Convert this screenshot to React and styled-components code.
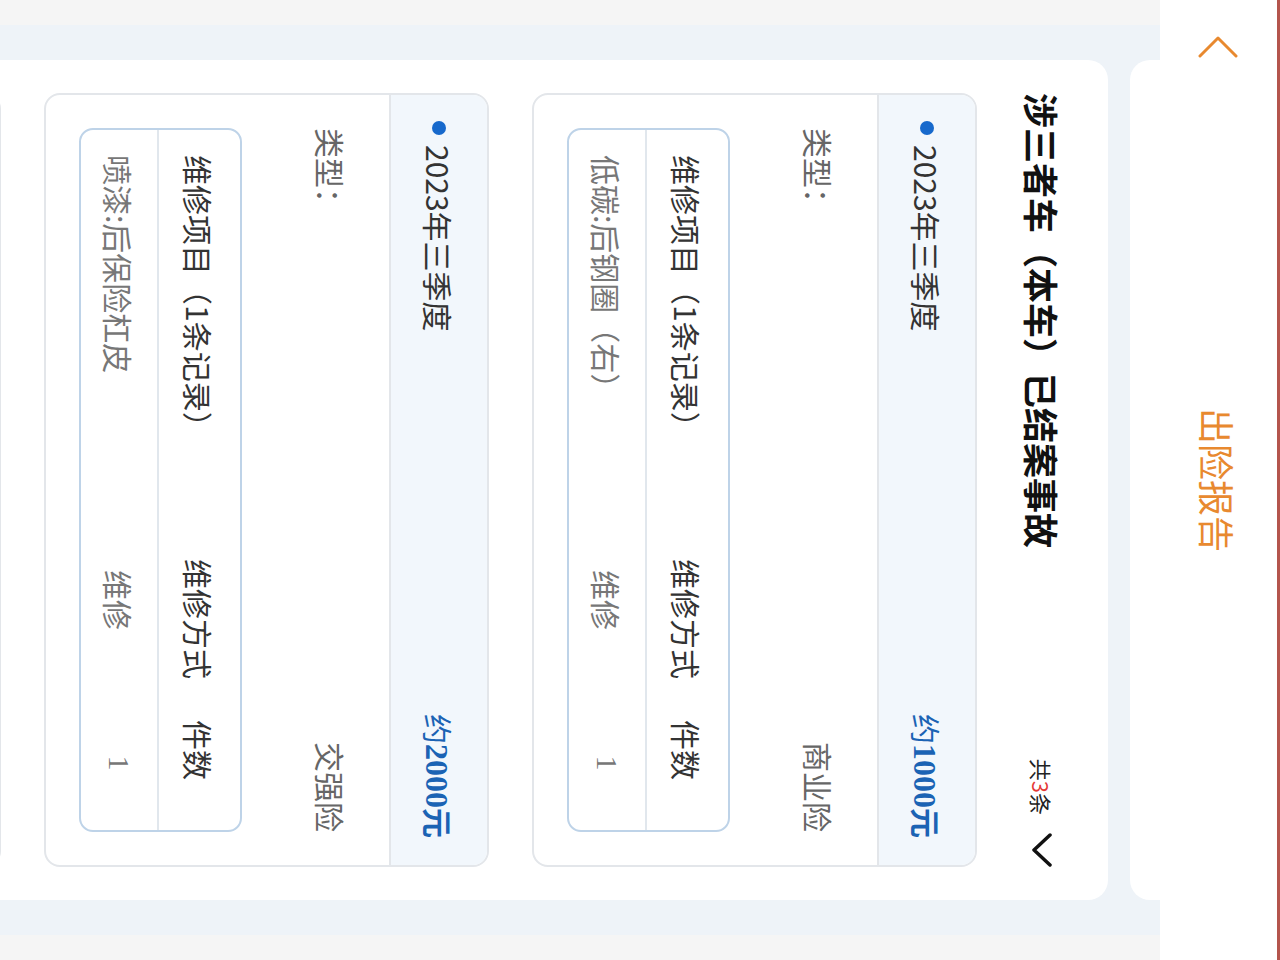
import React from 'react';
import styled, { createGlobalStyle } from 'styled-components';

const GlobalStyle = createGlobalStyle`
  html, body {
    margin: 0;
    padding: 0;
    overflow: hidden;
    background: #f5f5f5;
  }
  body {
    font-family: "Noto Sans CJK SC", "Noto Sans", sans-serif;
  }
`;

// the phone screen was captured sideways, so the portrait page is turned a quarter
const Viewport = styled.div`
  width: 1280px;
  height: 960px;
  overflow: hidden;
`;

const Portrait = styled.div`
  width: 960px;
  height: 1280px;
  display: flex;
  flex-direction: column;
  background: #f5f5f5;
  overflow: hidden;
  transform-origin: 0 0;
  transform: translateX(1280px) rotate(90deg);
`;

const Header = styled.header`
  flex: none;
  box-sizing: border-box;
  height: 120px;
  border-top: 3px solid #b4554d;
  background: #fff;
  display: grid;
  grid-template-columns: 1fr auto 1fr;
  align-items: center;
  padding: 0 35px;
`;

const HeaderTitle = styled.h1`
  margin: 0;
  font-size: 36px;
  font-weight: 400;
  color: #e8892f;
  letter-spacing: 0;
`;

const BackButton = styled.button`
  justify-self: start;
  border: 0;
  padding: 0;
  background: none;
  display: flex;
  svg {
    width: 24px;
    height: 40px;
    stroke: #e8892f;
    stroke-width: 3;
    fill: none;
  }
`;

const Main = styled.main`
  flex: 1;
  padding: 0 25px;
  min-height: 0;
`;

const Section = styled.section`
  height: 100%;
  background: #eef3f8;
  padding: 0 35px;
  display: flex;
  flex-direction: column;
  gap: 22px;
`;

const CardTail = styled.div`
  flex: none;
  height: 30px;
  background: #fff;
  border-radius: 0 0 20px 20px;
`;

const Card = styled.div`
  flex: none;
  background: #fff;
  border-radius: 20px;
  padding: 0 33px 40px;
`;

const CardHead = styled.div`
  height: 131px;
  display: flex;
  align-items: center;
  justify-content: space-between;
`;

const CardTitle = styled.h2`
  margin: 0;
  font-size: 35px;
  font-weight: 700;
  color: #111;
`;

const Count = styled.div`
  display: flex;
  align-items: center;
  gap: 18px;
  font-size: 22px;
  color: #222;
  em {
    font-style: normal;
    color: #e53935;
  }
  svg {
    width: 34px;
    height: 24px;
    stroke: #111;
    stroke-width: 3.5;
    fill: none;
  }
`;

const RecordList = styled.div`
  display: flex;
  flex-direction: column;
  gap: 43px;
`;

const Record = styled.div`
  border: 2px solid #e3e6ea;
  border-radius: 16px;
  overflow: hidden;
`;

const RecordHead = styled.div`
  height: 96px;
  background: #f2f7fc;
  border-bottom: 2px solid #e3e6ea;
  padding: 0 27px 0 26px;
  display: flex;
  align-items: center;
  justify-content: space-between;
`;

const Period = styled.div`
  display: flex;
  align-items: center;
  gap: 10px;
  font-size: 30px;
  color: #333;
  &::before {
    content: '';
    width: 14px;
    height: 14px;
    border-radius: 50%;
    background: #1769cc;
  }
`;

const Amount = styled.div`
  font-size: 30px;
  color: #1b63b4;
  font-weight: 700;
  span {
    font-weight: 400;
  }
  b {
    font-family: "Liberation Serif", serif;
    font-size: 32px;
  }
`;

const RecordBody = styled.div`
  padding: 38px 33px 33px;
`;

const TypeRow = styled.div`
  display: flex;
  justify-content: space-between;
  line-height: 40px;
  font-size: 30px;
  color: #666;
`;

const Table = styled.div`
  margin-top: 69px;
  border: 2px solid #bed3e8;
  border-radius: 14px;
  overflow: hidden;
`;

const TableRow = styled.div`
  display: grid;
  grid-template-columns: ${({ $cols }) => $cols};
  column-gap: ${({ $gap }) => $gap}px;
  align-items: center;
  height: ${({ $h }) => $h}px;
  padding: 0 ${({ $pr }) => $pr}px 0 25px;
  font-size: 30px;
  color: ${({ $head }) => ($head ? '#333' : '#777')};
  & + & {
    border-top: 2px solid #e1e7ed;
  }
  & > :not(:first-child) {
    text-align: center;
  }
`;

const Num = styled.div`
  font-family: "Liberation Serif", serif;
`;

const records = [
  { amount: '1000', type: '商业险', item: '低碳:后钢圈（右）' },
  { amount: '2000', type: '交强险', item: '喷漆:后保险杠皮' },
  { amount: '1500', type: '商业险', item: '钣金:前保险杠' },
];

const Chevron = ({ points, viewBox }) => (
  <svg viewBox={viewBox}>
    <polyline points={points} strokeLinecap="round" strokeLinejoin="round" />
  </svg>
);

export default function App() {
  return (
    <Viewport>
      <GlobalStyle />
      <Portrait>
        <Header>
          <BackButton>
            <Chevron viewBox="0 0 24 40" points="21,2 3,20 21,38" />
          </BackButton>
          <HeaderTitle>出险报告</HeaderTitle>
          <div />
        </Header>
        <Main>
          <Section>
            <CardTail />
            <Card>
              <CardHead>
                <CardTitle>涉三者车（本车）已结案事故</CardTitle>
                <Count>
                  <span>
                    共<em>3</em>条
                  </span>
                  <Chevron viewBox="0 0 34 24" points="2,4 17,20 32,4" />
                </Count>
              </CardHead>
              <RecordList>
                {records.map((r) => (
                  <Record key={r.amount}>
                    <RecordHead>
                      <Period>2023年三季度</Period>
                      <Amount>
                        <span>约</span>
                        <b>{r.amount}</b>元
                      </Amount>
                    </RecordHead>
                    <RecordBody>
                      <TypeRow>
                        <span>类型：</span>
                        <span>{r.type}</span>
                      </TypeRow>
                      <Table>
                        <TableRow $head $cols="1fr 140px 100px" $gap={11} $pr={30} $h={81}>
                          <div>维修项目（1条记录）</div>
                          <div>维修方式</div>
                          <div>件数</div>
                        </TableRow>
                        <TableRow $cols="1fr 140px 100px" $gap={43} $pr={17} $h={76}>
                          <div>{r.item}</div>
                          <div>维修</div>
                          <Num>1</Num>
                        </TableRow>
                      </Table>
                    </RecordBody>
                  </Record>
                ))}
              </RecordList>
            </Card>
          </Section>
        </Main>
      </Portrait>
    </Viewport>
  );
}
